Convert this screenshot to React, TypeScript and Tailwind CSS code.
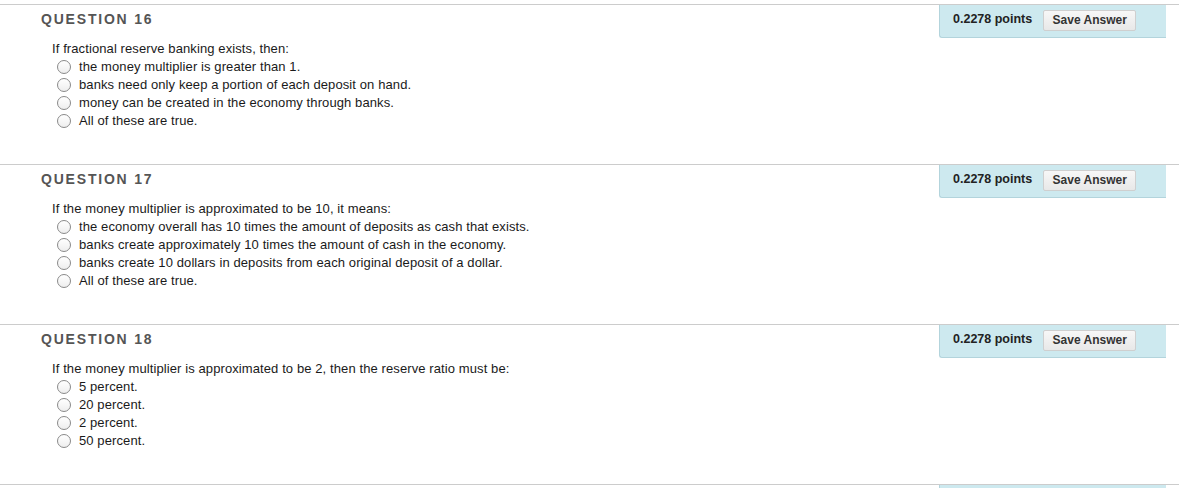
import React from "react";

type Q = { num: number; text: string; options: string[] };

const questions: Q[] = [
  {
    num: 16,
    text: "If fractional reserve banking exists, then:",
    options: [
      "the money multiplier is greater than 1.",
      "banks need only keep a portion of each deposit on hand.",
      "money can be created in the economy through banks.",
      "All of these are true.",
    ],
  },
  {
    num: 17,
    text: "If the money multiplier is approximated to be 10, it means:",
    options: [
      "the economy overall has 10 times the amount of deposits as cash that exists.",
      "banks create approximately 10 times the amount of cash in the economy.",
      "banks create 10 dollars in deposits from each original deposit of a dollar.",
      "All of these are true.",
    ],
  },
  {
    num: 18,
    text: "If the money multiplier is approximated to be 2, then the reserve ratio must be:",
    options: ["5 percent.", "20 percent.", "2 percent.", "50 percent."],
  },
];

function Panel() {
  return (
    <div className="w-[227px] h-[33px] mr-[13px] shrink-0 bg-[#cde9ef] border-l border-b border-[#b3d4dc] rounded-bl-[3px] flex items-center pl-[13px]">
      <span className="text-[12.5px] font-bold text-[#222] leading-none -mt-[3px]">0.2278 points</span>
      <button className="ml-[11px] w-[93px] h-[21px] -mt-[2px] rounded-[2px] border border-[#cfcfcf] bg-gradient-to-b from-[#f7f7f7] to-[#e8e8e8] text-[12px] font-bold text-[#333] leading-none flex items-center justify-center">
        Save Answer
      </button>
    </div>
  );
}

function Radio() {
  return (
    <span className="w-[14px] h-[14px] rounded-full border border-[#8a8a8a] bg-gradient-to-b from-[#ffffff] to-[#eeeeee] shrink-0 inline-block" />
  );
}

function Question({ q }: { q: Q }) {
  return (
    <div className="h-[160px] border-t border-[#cccccc] flex">
      <div className="flex-1 pl-[41px] pt-[6px]">
        <div className="text-[14px] font-bold tracking-[1.8px] text-[#555555] leading-[16px]">
          QUESTION {q.num}
        </div>
        <div className="mt-[13px] pl-[11px] text-[13px] tracking-[0.1px] text-[#1a1a1a] leading-[18px]">
          <div>{q.text}</div>
          {q.options.map((o) => (
            <div key={o} className="flex items-center h-[18px]">
              <span className="ml-[5px] mr-[8px] flex items-center">
                <Radio />
              </span>
              <span>{o}</span>
            </div>
          ))}
        </div>
      </div>
      <Panel />
    </div>
  );
}

export default function App() {
  return (
    <div
      className="w-[1179px] h-[488px] bg-white pt-[4px] overflow-hidden"
      style={{ fontFamily: '"Liberation Sans", Arial, Helvetica, sans-serif' }}
    >
      {questions.map((q) => (
        <Question key={q.num} q={q} />
      ))}
      <div className="h-[10px] border-t border-[#cccccc] flex">
        <div className="flex-1" />
        <div className="w-[227px] mr-[13px] bg-[#cde9ef] border-l border-[#b3d4dc]" />
      </div>
    </div>
  );
}
